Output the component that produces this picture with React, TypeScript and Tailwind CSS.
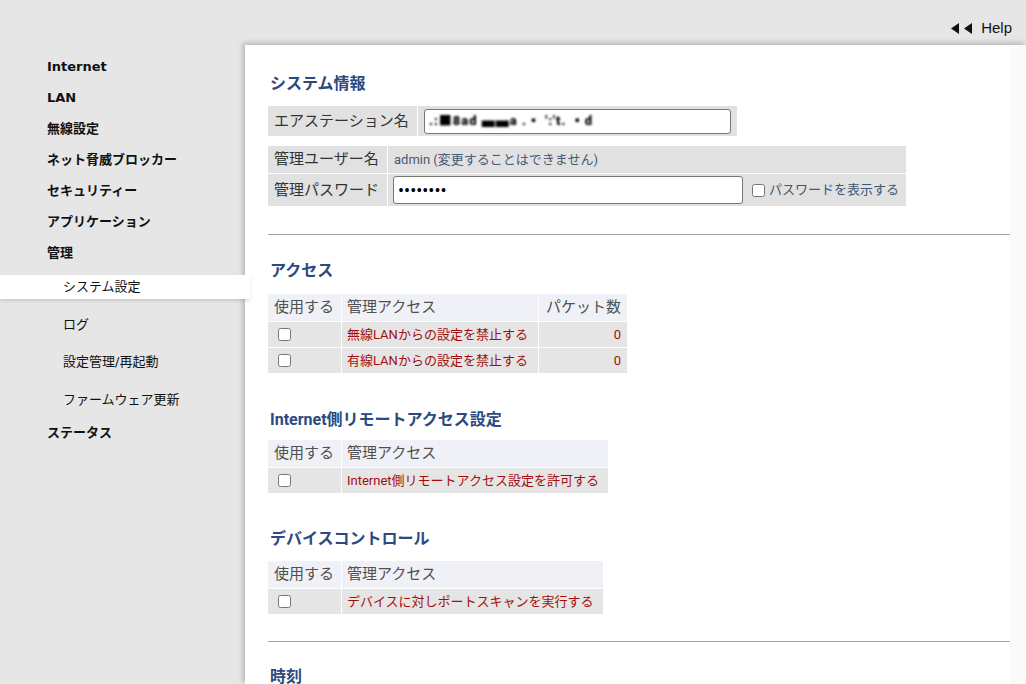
import React from 'react';

const MENU = ['Internet', 'LAN', '無線設定', 'ネット脅威ブロッカー', 'セキュリティー', 'アプリケーション', '管理'];
const SUB_MENU = ['システム設定', 'ログ', '設定管理/再起動', 'ファームウェア更新'];

const panelFont = { fontFamily: 'Roboto, "Noto Sans CJK JP", sans-serif' };
const sideFont = { fontFamily: '"DejaVu Sans", "Noto Sans CJK JP", sans-serif' };

function Heading({ children, className = '' }: { children: React.ReactNode; className?: string }) {
  return (
    <h2 className={`pl-[3px] text-[16px] font-bold leading-[24px] text-[#2c4a80] ${className}`}>
      {children}
    </h2>
  );
}

function Rule({ className = '' }: { className?: string }) {
  return <div className={`ml-px h-px bg-[#a3a3a3] ${className}`} />;
}

function AccessTable({
  rows,
  wide,
  packets,
  className = '',
}: {
  rows: string[];
  wide: string;
  packets?: boolean;
  className?: string;
}) {
  return (
    <table className={`border-separate border-spacing-[1px] ${className}`}>
      <thead>
        <tr className="bg-[#eff1f6] text-[15px] text-[#505050]">
          <th className="h-[27px] w-[73px] px-[6px] text-left font-normal">使用する</th>
          <th className={`${wide} px-[5px] text-left font-normal`}>管理アクセス</th>
          {packets && <th className="w-[88px] px-[6px] text-right font-normal">パケット数</th>}
        </tr>
      </thead>
      <tbody>
        {rows.map((label) => (
          <tr key={label} className="bg-[#e5e5e5] text-[13px] text-[#a30d0d]">
            <td className="h-[25px] px-[6px] align-middle">
              <input type="checkbox" className="block ml-[4px]" />
            </td>
            <td className="px-[5px]">{label}</td>
            {packets && <td className="px-[6px] text-right">0</td>}
          </tr>
        ))}
      </tbody>
    </table>
  );
}

export default function App() {
  return (
    <div className="flex h-[684px] w-[1026px] flex-col overflow-hidden bg-[#e6e6e6] text-[#111]">
      {/* top bar */}
      <div className="flex h-[45px] shrink-0 items-start justify-end pr-[14px] pt-[19px]">
        <div className="flex items-center text-[15px] leading-[18px] text-[#111]" style={{ fontFamily: '"Liberation Sans", Arial, sans-serif' }}>
          <svg width="22" height="11" viewBox="0 0 22 11" className="mt-px">
            <polygon points="8,0 0,5.5 8,11" fill="#111" />
            <polygon points="21,0 13,5.5 21,11" fill="#111" />
          </svg>
          <span className="ml-[8px]">Help</span>
        </div>
      </div>

      <div className="flex min-h-0 flex-1">
        {/* sidebar */}
        <nav className="w-[245px] shrink-0 pt-[6px] text-[13px]" style={sideFont}>
          {MENU.map((m) => (
            <div key={m} className="flex h-[31px] items-center pl-[47px] font-bold">
              {m}
            </div>
          ))}
          <div className="flex flex-col gap-[13.5px] pb-[6px] pt-[7px]">
            {SUB_MENU.map((s, i) => (
              <div
                key={s}
                className={`flex h-[24px] items-center pl-[63px] ${
                  i === 0 ? 'relative z-10 w-[250px] bg-white shadow-[0_2px_3px_rgba(0,0,0,0.12)]' : ''
                }`}
              >
                {s}
              </div>
            ))}
          </div>
          <div className="flex h-[31px] items-center pl-[47px] font-bold">ステータス</div>
        </nav>

        {/* main panel */}
        <main className="flex flex-1 shadow-[-2px_-2px_5px_rgba(0,0,0,0.22)]">
          <div className="flex-1 bg-white pl-[22px] pt-[27px]" style={panelFont}>
            <Heading>システム情報</Heading>

            <table className="mt-[9px] border-separate border-spacing-[1px] text-[15px] text-[#333]">
              <tbody>
                <tr className="bg-[#e1e1e1]">
                  <td className="h-[30px] w-[149px] px-[6px]">エアステーション名</td>
                  <td className="w-[319px] px-[6px]">
                    <div className="flex h-[25px] w-[307px] items-center overflow-hidden rounded-[3px] border border-[#767676] bg-white pl-[4px]">
                      <span className="text-[13px] font-black tracking-[1px] text-[#000] blur-[1px]">
                        .:■8ad ▄▄a .▪ ':'t. ▪d
                      </span>
                    </div>
                  </td>
                </tr>
              </tbody>
            </table>

            <table className="mt-[8px] border-separate border-spacing-[1px] text-[15px] text-[#333]">
              <tbody>
                <tr className="bg-[#e1e1e1]">
                  <td className="h-[27px] w-[119px] px-[6px]">管理ユーザー名</td>
                  <td className="w-[518px] px-[6px] text-[13px] text-[#4a5a70]">admin (変更することはできません)</td>
                </tr>
                <tr className="bg-[#e1e1e1]">
                  <td className="h-[32px] px-[6px]">管理パスワード</td>
                  <td className="pl-[5px]">
                    <div className="flex items-center">
                      <input
                        type="password"
                        readOnly
                        defaultValue="password"
                        className="h-[28px] w-[350px] rounded-[3px] border border-[#767676] bg-white px-[4px] text-[18px] text-black"
                      />
                      <input type="checkbox" className="ml-[9px] mr-[4px]" />
                      <span className="text-[13px] text-[#3e5677]">パスワードを表示する</span>
                    </div>
                  </td>
                </tr>
              </tbody>
            </table>

            <Rule className="mt-[27px]" />

            <Heading className="mt-[24px]">アクセス</Heading>
            <AccessTable
              className="mt-[10px]"
              wide="w-[196px]"
              packets
              rows={['無線LANからの設定を禁止する', '有線LANからの設定を禁止する']}
            />

            <Heading className="mt-[34px]">Internet側リモートアクセス設定</Heading>
            <AccessTable className="mt-[7px]" wide="w-[266px]" rows={['Internet側リモートアクセス設定を許可する']} />

            <Heading className="mt-[33px]">デバイスコントロール</Heading>
            <AccessTable className="mt-[9px]" wide="w-[261px]" rows={['デバイスに対しポートスキャンを実行する']} />

            <Rule className="mt-[26px]" />

            <Heading className="mt-[23px]">時刻</Heading>
          </div>
          <div className="w-[16px] shrink-0 bg-[#fafafa]" />
        </main>
      </div>
    </div>
  );
}
